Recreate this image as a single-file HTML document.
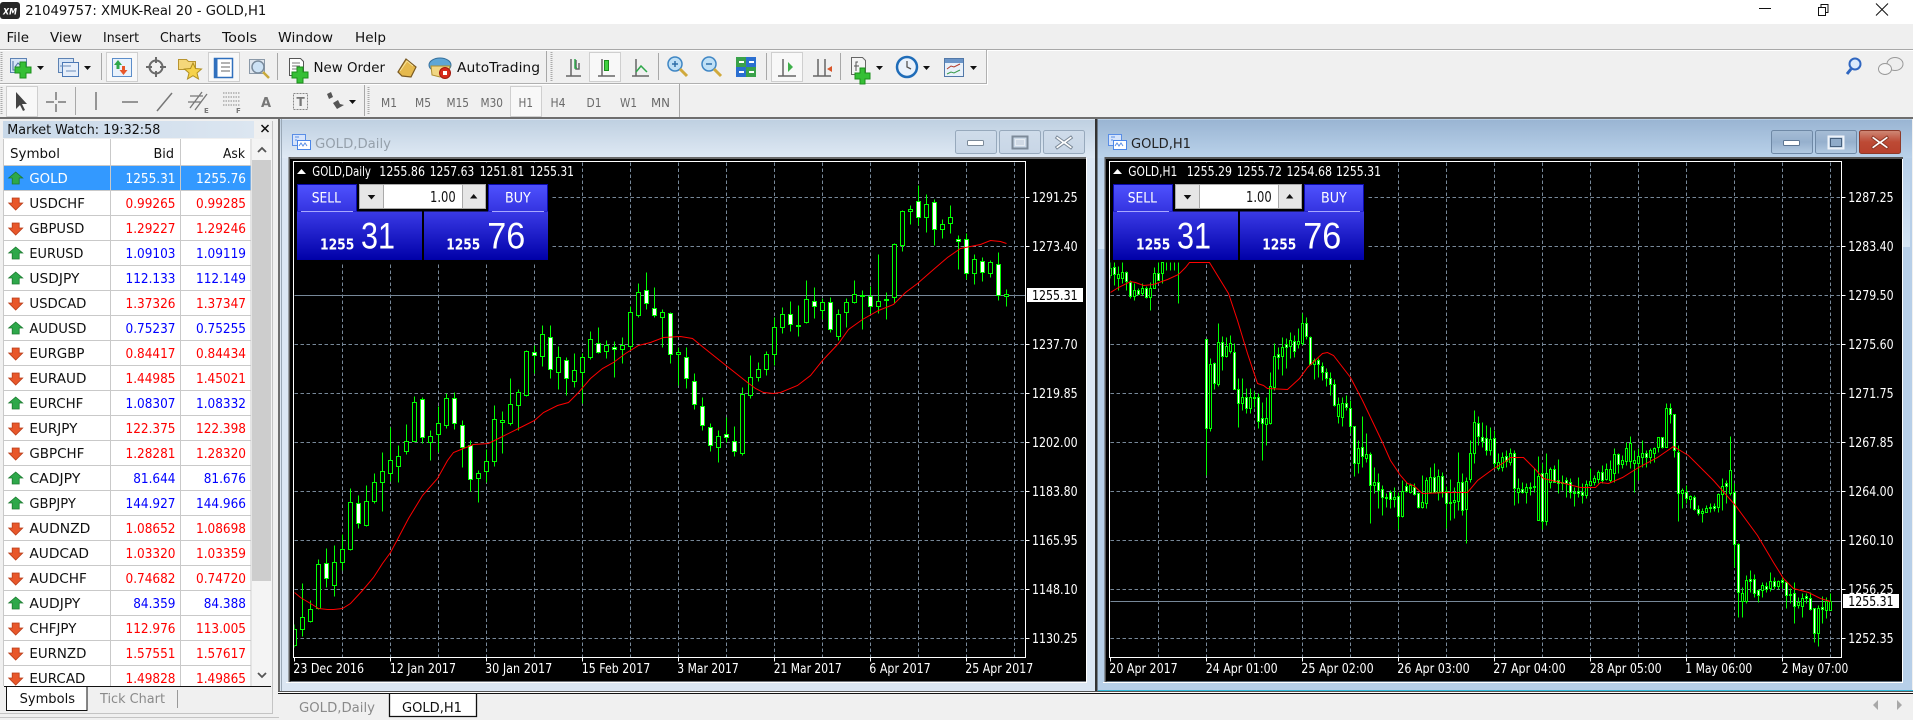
<!DOCTYPE html>
<html lang="en"><head><meta charset="utf-8"><title>21049757: XMUK-Real 20 - GOLD,H1</title>
<style>
html,body{margin:0;padding:0;width:1913px;height:720px;overflow:hidden;background:#f0f0f0}
svg{display:block}
text{font-family:"DejaVu Sans","Liberation Sans",sans-serif;font-size:13.5px;white-space:pre}
.w text{fill:#fff}
.r{fill:#f00}.b{fill:#00f}.s{fill:#111}
.tf{fill:#6a6a6a;font-size:12.5px}
.u{fill:#2ea84a;stroke:#1c7a30;stroke-width:.8}
.d{fill:#e8572a;stroke:#b83c18;stroke-width:.8}
.g{stroke:#778899;stroke-width:1;stroke-dasharray:3.5 2.5;fill:none}
.ic{fill:none;stroke:#666;stroke-width:1.5}
</style></head><body>
<svg width="1913" height="720" viewBox="0 0 1913 720" xmlns="http://www.w3.org/2000/svg">
<defs>
<linearGradient id="ti" x1="0" y1="0" x2="0" y2="1"><stop offset="0" stop-color="#bfd0e1"/><stop offset="1" stop-color="#dfe9f4"/></linearGradient>
<linearGradient id="ta" x1="0" y1="0" x2="0" y2="1"><stop offset="0" stop-color="#9ab5d3"/><stop offset="1" stop-color="#bad2ea"/></linearGradient>
<linearGradient id="bi" x1="0" y1="0" x2="0" y2="1"><stop offset="0" stop-color="#cfdcea"/><stop offset="1" stop-color="#c8d6e6"/></linearGradient>
<linearGradient id="ba" x1="0" y1="0" x2="0" y2="1"><stop offset="0" stop-color="#a6bdd6"/><stop offset=".5" stop-color="#96b0cd"/><stop offset="1" stop-color="#b4cbe2"/></linearGradient>
<linearGradient id="br" x1="0" y1="0" x2="0" y2="1"><stop offset="0" stop-color="#cf8a78"/><stop offset=".5" stop-color="#bd4a35"/><stop offset="1" stop-color="#b8412d"/></linearGradient>
<linearGradient id="bs" x1="0" y1="0" x2="0" y2="1"><stop offset="0" stop-color="#4f52ff"/><stop offset="1" stop-color="#3434e0"/></linearGradient>
<linearGradient id="bp" x1="0" y1="0" x2="0" y2="1"><stop offset="0" stop-color="#3a3ae6"/><stop offset="1" stop-color="#0000a8"/></linearGradient>
<linearGradient id="mw" x1="0" y1="0" x2="1" y2="0"><stop offset="0" stop-color="#c8d8e8"/><stop offset="1" stop-color="#dce6f1"/></linearGradient>
<linearGradient id="sl" x1="0" y1="0" x2="0" y2="1"><stop offset="0" stop-color="#b7cfe8"/><stop offset="1" stop-color="#d4e4f3"/></linearGradient>
<clipPath id="c1"><rect x="294" y="162" width="731" height="495"/></clipPath>
<clipPath id="c2"><rect x="1110" y="162" width="731" height="495"/></clipPath>
</defs>

<!-- title bar -->
<rect width="1913" height="24" fill="#fff"/>
<rect x="0" y="2" width="20" height="17" rx="3" fill="#262626"/>
<text x="3" y="14.5" style="font-size:9px;font-weight:bold;font-style:italic" fill="#fff" textLength="14" lengthAdjust="spacingAndGlyphs">XM</text>
<text x="25.3" y="15" fill="#111" textLength="241" lengthAdjust="spacingAndGlyphs">21049757: XMUK-Real 20 - GOLD,H1</text>
<path d="M1759 8.5h12" stroke="#111" fill="none"/>
<path d="M1818.5 7.5h7v8h-7zM1821 7.5v-3h7v8h-2" stroke="#111" fill="none"/>
<path d="M1876 3.5l12 12M1888 3.5l-12 12" stroke="#111" fill="none"/>

<!-- menu -->
<rect y="24" width="1913" height="25" fill="#efefef"/>
<g fill="#111">
<text x="6.5" y="42" textLength="22.5" lengthAdjust="spacingAndGlyphs">File</text>
<text x="50" y="42" textLength="32" lengthAdjust="spacingAndGlyphs">View</text>
<text x="103" y="42" textLength="36" lengthAdjust="spacingAndGlyphs">Insert</text>
<text x="160" y="42" textLength="41" lengthAdjust="spacingAndGlyphs">Charts</text>
<text x="222" y="42" textLength="35" lengthAdjust="spacingAndGlyphs">Tools</text>
<text x="278" y="42" textLength="55" lengthAdjust="spacingAndGlyphs">Window</text>
<text x="355" y="42" textLength="31" lengthAdjust="spacingAndGlyphs">Help</text>
</g>
<rect y="49" width="1913" height="1" fill="#a8a8a8"/>
<rect y="50" width="1913" height="1" fill="#fff"/>

<!-- toolbar 1 -->
<rect y="51" width="1913" height="66" fill="#f0f0f0"/>
<path d="M0 83.5H986.5V50" stroke="#b0b0b0" fill="none"/>
<path d="M0 84.5H987.5V50" stroke="#fff" fill="none"/>
<path d="M1.5 52V82M551.5 52V82" stroke="#aaa" stroke-dasharray="1 1" stroke-width="2" fill="none"/>
<g fill="#f8f8f8" stroke="#cfcfcf">
<rect x="106.5" y="52.5" width="31" height="29"/><rect x="208.5" y="52.5" width="31" height="29"/>
<rect x="589.5" y="52.5" width="31" height="29"/><rect x="771.5" y="52.5" width="31" height="29"/>
<rect x="6.5" y="86.5" width="31" height="30"/><rect x="510.5" y="86.5" width="31" height="30"/>
</g>
<path d="M101.5 53V80M277.5 53V80M546.5 51V82M658.5 53V80M766.5 53V80M840.5 53V80M75.5 87V115M364.5 85V116M679.5 84V117" stroke="#a8a8a8" fill="none"/>

<!-- new chart -->
<rect x="10.5" y="58.5" width="16" height="14" fill="#d5e4f6" stroke="#5d82b3"/>
<path d="M13 61v9h9M15 67l3-4 3 3" fill="none" stroke="#4a6f9e"/>
<path d="M20 62h6v5h5v6h-5v5h-6v-5h-5v-6h5z" fill="#35bf35" stroke="#1c8f1c"/>
<path d="M37 66h7l-3.500 4zM84 66h7l-3.500 4zM876 66h7l-3.500 4zM923 66h7l-3.500 4zM970 66h7l-3.500 4zM349 100h7l-3.500 4z" fill="#111"/>
<!-- profiles -->
<rect x="58.500" y="58.500" width="15" height="14" fill="#d5e4f6" stroke="#5d82b3"/>
<rect x="62.500" y="62.500" width="16" height="14" fill="#e6eef9" stroke="#4a77b5"/>
<path d="M60 66h11M66 71h10" stroke="#6a8cba" fill="none"/>
<!-- market watch -->
<rect x="112.500" y="58.500" width="19" height="18" fill="#e9f2fc" stroke="#5c8dc9"/>
<path d="M118 60l4 5h-2.500v4h-3v-4H114z" fill="#2ea84a"/><path d="M122 66h3v4h2.500l-4 5-4-5H122z" fill="#e8572a"/>
<!-- navigator crosshair -->
<circle cx="156" cy="67" r="6.500" fill="none" stroke="#6a6a6a" stroke-width="2"/>
<path d="M156 57v6M156 71v6M146 67h6M160 67h6" stroke="#6a6a6a" stroke-width="2" fill="none"/>
<!-- favorites -->
<path d="M178.500 59.500h8l2 2h7v8h-17z" fill="#f4d77a" stroke="#b89430"/>
<path d="M193 63l2.500 5.500 6 .5-4.500 4 1.500 6-5.500-3.300-5.500 3.300 1.500-6-4.500-4 6-.5z" fill="#f6d24a" stroke="#b08f20"/>
<!-- navigator panel -->
<rect x="214.500" y="58.500" width="18" height="19" fill="#fff" stroke="#2f6fbd" stroke-width="1.500"/>
<path d="M216 59v18" stroke="#2f6fbd" stroke-width="3"/><path d="M221 63h9M221 67h9M221 71h9" stroke="#666" fill="none"/>
<!-- tester -->
<rect x="249.500" y="59.500" width="15" height="14" fill="#dfe6ee" stroke="#8b99a8"/>
<circle cx="258" cy="67" r="6" fill="#cde2f5" stroke="#7a8b9c" stroke-width="1.500"/>
<path d="M263 72l6 6" stroke="#c9a93a" stroke-width="2.500"/>
<!-- new order -->
<path d="M289.500 58.500h11l3 3v14h-14z" fill="#fff" stroke="#555"/>
<path d="M292 63h8M292 66h8M292 69h5" stroke="#777" fill="none"/>
<path d="M297 67h6v5h5v6h-5v5h-6v-5h-5v-6h5z" fill="#35bf35" stroke="#1c8f1c"/>
<text x="313.500" y="72" fill="#111" textLength="71.500" lengthAdjust="spacingAndGlyphs">New Order</text>
<!-- gold bar -->
<path d="M398 72l8-13 10 8-5 10-9-1z" fill="#e5b94d" stroke="#7a5a22" stroke-width="1.200"/>
<path d="M400 71l7-10 6 5" fill="none" stroke="#f7e39b"/>
<!-- autotrading -->
<ellipse cx="440" cy="65" rx="11" ry="7" fill="#5ea6d6" stroke="#356f9c"/>
<path d="M431 66l1 9 8 2 8-3 2-8z" fill="#f1d682" stroke="#b08f30"/>
<circle cx="445" cy="73" r="5.500" fill="#d72a1c" stroke="#a01a10"/><rect x="443" y="71" width="4" height="4" fill="#fff"/>
<text x="457" y="72" fill="#111" textLength="83" lengthAdjust="spacingAndGlyphs">AutoTrading</text>
<!-- chart types -->
<path d="M566 76h15M571 59v17M577 60v-0M576 60v9h3v-6" fill="none" stroke="#666" stroke-width="1.500"/>
<path d="M575 59v9h2" fill="none" stroke="#2ea84a" stroke-width="1.500"/>
<path d="M598 76h17M602 59v17" fill="none" stroke="#666" stroke-width="1.500"/>
<rect x="604.500" y="60.500" width="4" height="10" fill="#40d040" stroke="#1c8f1c"/>
<path d="M632 76h17M636 59v17" fill="none" stroke="#666" stroke-width="1.500"/><path d="M636 72l5-6 6 6" fill="none" stroke="#2ea84a" stroke-width="1.500"/>
<!-- zoom -->
<circle cx="675" cy="64" r="7" fill="#bfe0f6" stroke="#3f86c4" stroke-width="1.500"/><path d="M672 64h6M675 61v6" stroke="#2f6fa8" stroke-width="1.500"/>
<path d="M680 69l7 7" stroke="#d0a93c" stroke-width="3"/>
<circle cx="709" cy="64" r="7" fill="#bfe0f6" stroke="#3f86c4" stroke-width="1.500"/><path d="M706 64h6" stroke="#2f6fa8" stroke-width="1.500"/>
<path d="M714 69l7 7" stroke="#d0a93c" stroke-width="3"/>
<!-- tile -->
<rect x="736" y="57" width="10" height="10" fill="#3aa24a"/><rect x="746" y="57" width="10" height="10" fill="#2b6fd0"/>
<rect x="736" y="67" width="10" height="10" fill="#2b6fd0"/><rect x="746" y="67" width="10" height="10" fill="#3aa24a"/>
<path d="M739 62h5M749 62h5M739 72h5M749 72h5" stroke="#fff" stroke-width="2"/>
<!-- shift -->
<path d="M778 76h18M783 59v17" fill="none" stroke="#666" stroke-width="1.500"/><path d="M788 62l5 5-5 5z" fill="#3fb04a"/>
<path d="M813 76h18M818 59v17M825 59v17" fill="none" stroke="#666" stroke-width="1.500"/><path d="M832 66l-5 3 5 3z" fill="#d9562a"/>
<!-- indicators -->
<path d="M851.500 57.500h11l3 3v14h-14z" fill="#f4f4f4" stroke="#666"/><path d="M858 62h-2v9M854 66h5" fill="none" stroke="#555"/>
<path d="M860 68h5v5h5v6h-5v5h-5v-5h-5v-6h5z" fill="#35bf35" stroke="#1c8f1c"/>
<!-- periodicity clock -->
<circle cx="907" cy="67" r="10" fill="#eaf2fb" stroke="#1f6cb8" stroke-width="2.500"/><path d="M907 61v6l4 2" fill="none" stroke="#555" stroke-width="1.300"/>
<!-- templates -->
<rect x="944.500" y="58.500" width="19" height="18" fill="#e9f1fa" stroke="#5278a8"/>
<rect x="945" y="59" width="18" height="4" fill="#6b95c8"/>
<path d="M947 69l4-3 3 1 6-3" stroke="#b03a2a" fill="none"/><path d="M947 74l4-2 3 1 6-3" stroke="#3a9a4a" fill="none"/>
<!-- search/chat -->
<circle cx="1855" cy="64" r="5.500" fill="#dbeafb" stroke="#2f66c0" stroke-width="2"/><path d="M1851 69l-4 5" stroke="#2f66c0" stroke-width="3"/>
<ellipse cx="1895" cy="64" rx="8" ry="6.500" fill="#eee" stroke="#999"/><ellipse cx="1885" cy="69" rx="6.500" ry="5.500" fill="#f5f5f5" stroke="#999"/>

<!-- toolbar 2 -->
<path d="M1.500 87V115M368.500 87V115" stroke="#aaa" stroke-dasharray="1 1" stroke-width="2" fill="none"/>
<path d="M16 92v17l4-4 3 6 2-1-3-6h5z" fill="#444"/>
<path d="M56 92v8M56 104v8M46 102h8M58 102h8" stroke="#777" stroke-width="1.500" fill="none"/>
<path d="M96 92v18M122 102h16M157 111l15-18" stroke="#777" stroke-width="1.500" fill="none"/>
<path d="M190 108l12-16M195 110l12-16M190 96h13M188 102h13" stroke="#777" stroke-width="1.300" fill="none"/>
<text x="204" y="113" style="font-size:7px;font-weight:bold" fill="#777">E</text>
<path d="M223 93h17M223 97h17M223 101h17M223 105h17" stroke="#888" stroke-dasharray="1.500 1" fill="none"/>
<text x="236" y="113" style="font-size:7px;font-weight:bold" fill="#777">F</text>
<text x="261" y="107" style="font-size:13px;font-weight:bold" fill="#777">A</text>
<rect x="293.500" y="93.500" width="14" height="16" fill="none" stroke="#888" stroke-dasharray="2 1"/>
<text x="296.500" y="106" style="font-size:12px;font-weight:bold" fill="#777">T</text>
<path d="M327 94l4-2 2 5-4 2zM333 103l5-3 2 4 4 1-7 4z" fill="#555"/>

<!-- timeframes -->
<g class="tf">
<text class="tf" x="381" y="107" textLength="16" lengthAdjust="spacingAndGlyphs">M1</text>
<text class="tf" x="415" y="107" textLength="16" lengthAdjust="spacingAndGlyphs">M5</text>
<text class="tf" x="446.500" y="107" textLength="22.500" lengthAdjust="spacingAndGlyphs">M15</text>
<text class="tf" x="480.500" y="107" textLength="22.500" lengthAdjust="spacingAndGlyphs">M30</text>
<text class="tf" x="518.500" y="107" textLength="14.500" lengthAdjust="spacingAndGlyphs">H1</text>
<text class="tf" x="550.500" y="107" textLength="15" lengthAdjust="spacingAndGlyphs">H4</text>
<text class="tf" x="586.500" y="107" textLength="15" lengthAdjust="spacingAndGlyphs">D1</text>
<text class="tf" x="620" y="107" textLength="17" lengthAdjust="spacingAndGlyphs">W1</text>
<text class="tf" x="651" y="107" textLength="19" lengthAdjust="spacingAndGlyphs">MN</text>
</g>

<!-- MDI top border -->
<rect y="117" width="1913" height="2" fill="#6e6e6e"/>

<!-- market watch panel -->
<rect x="3" y="121" width="251" height="17" fill="url(#mw)"/>
<text x="7.300" y="134" fill="#111" textLength="153" lengthAdjust="spacingAndGlyphs">Market Watch: 19:32:58</text>
<path d="M261.500 125l7 7M268.500 125l-7 7" stroke="#111" stroke-width="1.500"/>
<rect x="4" y="139" width="248" height="547" fill="#fff"/>
<rect x="252" y="139" width="20" height="547" fill="#f4f4f4"/>
<rect x="252" y="160" width="19" height="421" fill="#cdcdcd"/>
<path d="M258 152l4-4 4 4M258 673l4 4 4-4" fill="none" stroke="#555" stroke-width="1.800"/>
<rect x="4" y="165" width="247" height="25" fill="#3399ff"/>
<path d="M3.500 139V686M110.500 139V686M180.500 139V686M251 139V686M4 165.500H251M4 190.500H251M4 215.500H251M4 240.500H251M4 265.500H251M4 290.500H251M4 315.500H251M4 340.500H251M4 365.500H251M4 390.500H251M4 415.500H251M4 440.500H251M4 465.500H251M4 490.500H251M4 515.500H251M4 540.500H251M4 565.500H251M4 590.500H251M4 615.500H251M4 640.500H251M4 665.500H251" stroke="#c9c9c9" fill="none"/>
<text class="s" x="10" y="158" textLength="50" lengthAdjust="spacingAndGlyphs">Symbol</text>
<text class="s" x="153.500" y="158" textLength="20.500" lengthAdjust="spacingAndGlyphs">Bid</text>
<text class="s" x="223" y="158" textLength="22" lengthAdjust="spacingAndGlyphs">Ask</text>

<path class="u" d="M15.700 172l7 6h-3.500v6h-7v-6h-3.500z"/><text x="29.400" y="183" fill="#fff" textLength="38.400" lengthAdjust="spacingAndGlyphs">GOLD</text><text x="125.500" y="183" fill="#fff" textLength="50" lengthAdjust="spacingAndGlyphs">1255.31</text><text x="196" y="183" fill="#fff" textLength="50" lengthAdjust="spacingAndGlyphs">1255.76</text>
<path class="d" d="M12.200 198h7v5h3.500l-7 7-7-7h3.500z"/><text class="s" x="29.400" y="208" textLength="55.500" lengthAdjust="spacingAndGlyphs">USDCHF</text><text class="r" x="125.500" y="208" textLength="50" lengthAdjust="spacingAndGlyphs">0.99265</text><text class="r" x="196" y="208" textLength="50" lengthAdjust="spacingAndGlyphs">0.99285</text>
<path class="d" d="M12.200 223h7v5h3.500l-7 7-7-7h3.500z"/><text class="s" x="29.400" y="233" textLength="55" lengthAdjust="spacingAndGlyphs">GBPUSD</text><text class="r" x="125.500" y="233" textLength="50" lengthAdjust="spacingAndGlyphs">1.29227</text><text class="r" x="196" y="233" textLength="50" lengthAdjust="spacingAndGlyphs">1.29246</text>
<path class="u" d="M15.700 247l7 6h-3.500v6h-7v-6h-3.500z"/><text class="s" x="29.400" y="258" textLength="54" lengthAdjust="spacingAndGlyphs">EURUSD</text><text class="b" x="125.500" y="258" textLength="50" lengthAdjust="spacingAndGlyphs">1.09103</text><text class="b" x="196" y="258" textLength="50" lengthAdjust="spacingAndGlyphs">1.09119</text>
<path class="u" d="M15.700 272l7 6h-3.500v6h-7v-6h-3.500z"/><text class="s" x="29.400" y="283" textLength="50" lengthAdjust="spacingAndGlyphs">USDJPY</text><text class="b" x="125.500" y="283" textLength="50" lengthAdjust="spacingAndGlyphs">112.133</text><text class="b" x="196" y="283" textLength="50" lengthAdjust="spacingAndGlyphs">112.149</text>
<path class="d" d="M12.200 298h7v5h3.500l-7 7-7-7h3.500z"/><text class="s" x="29.400" y="308" textLength="57" lengthAdjust="spacingAndGlyphs">USDCAD</text><text class="r" x="125.500" y="308" textLength="50" lengthAdjust="spacingAndGlyphs">1.37326</text><text class="r" x="196" y="308" textLength="50" lengthAdjust="spacingAndGlyphs">1.37347</text>
<path class="u" d="M15.700 322l7 6h-3.500v6h-7v-6h-3.500z"/><text class="s" x="29.400" y="333" textLength="57" lengthAdjust="spacingAndGlyphs">AUDUSD</text><text class="b" x="125.500" y="333" textLength="50" lengthAdjust="spacingAndGlyphs">0.75237</text><text class="b" x="196" y="333" textLength="50" lengthAdjust="spacingAndGlyphs">0.75255</text>
<path class="d" d="M12.200 348h7v5h3.500l-7 7-7-7h3.500z"/><text class="s" x="29.400" y="358" textLength="55" lengthAdjust="spacingAndGlyphs">EURGBP</text><text class="r" x="125.500" y="358" textLength="50" lengthAdjust="spacingAndGlyphs">0.84417</text><text class="r" x="196" y="358" textLength="50" lengthAdjust="spacingAndGlyphs">0.84434</text>
<path class="d" d="M12.200 373h7v5h3.500l-7 7-7-7h3.500z"/><text class="s" x="29.400" y="383" textLength="57" lengthAdjust="spacingAndGlyphs">EURAUD</text><text class="r" x="125.500" y="383" textLength="50" lengthAdjust="spacingAndGlyphs">1.44985</text><text class="r" x="196" y="383" textLength="50" lengthAdjust="spacingAndGlyphs">1.45021</text>
<path class="u" d="M15.700 397l7 6h-3.500v6h-7v-6h-3.500z"/><text class="s" x="29.400" y="408" textLength="54" lengthAdjust="spacingAndGlyphs">EURCHF</text><text class="b" x="125.500" y="408" textLength="50" lengthAdjust="spacingAndGlyphs">1.08307</text><text class="b" x="196" y="408" textLength="50" lengthAdjust="spacingAndGlyphs">1.08332</text>
<path class="d" d="M12.200 423h7v5h3.500l-7 7-7-7h3.500z"/><text class="s" x="29.400" y="433" textLength="48" lengthAdjust="spacingAndGlyphs">EURJPY</text><text class="r" x="125.500" y="433" textLength="50" lengthAdjust="spacingAndGlyphs">122.375</text><text class="r" x="196" y="433" textLength="50" lengthAdjust="spacingAndGlyphs">122.398</text>
<path class="d" d="M12.200 448h7v5h3.500l-7 7-7-7h3.500z"/><text class="s" x="29.400" y="458" textLength="55" lengthAdjust="spacingAndGlyphs">GBPCHF</text><text class="r" x="125.500" y="458" textLength="50" lengthAdjust="spacingAndGlyphs">1.28281</text><text class="r" x="196" y="458" textLength="50" lengthAdjust="spacingAndGlyphs">1.28320</text>
<path class="u" d="M15.700 472l7 6h-3.500v6h-7v-6h-3.500z"/><text class="s" x="29.400" y="483" textLength="51" lengthAdjust="spacingAndGlyphs">CADJPY</text><text class="b" x="133.200" y="483" textLength="42.300" lengthAdjust="spacingAndGlyphs">81.644</text><text class="b" x="203.700" y="483" textLength="42.300" lengthAdjust="spacingAndGlyphs">81.676</text>
<path class="u" d="M15.700 497l7 6h-3.500v6h-7v-6h-3.500z"/><text class="s" x="29.400" y="508" textLength="46.500" lengthAdjust="spacingAndGlyphs">GBPJPY</text><text class="b" x="125.500" y="508" textLength="50" lengthAdjust="spacingAndGlyphs">144.927</text><text class="b" x="196" y="508" textLength="50" lengthAdjust="spacingAndGlyphs">144.966</text>
<path class="d" d="M12.200 523h7v5h3.500l-7 7-7-7h3.500z"/><text class="s" x="29.400" y="533" textLength="61" lengthAdjust="spacingAndGlyphs">AUDNZD</text><text class="r" x="125.500" y="533" textLength="50" lengthAdjust="spacingAndGlyphs">1.08652</text><text class="r" x="196" y="533" textLength="50" lengthAdjust="spacingAndGlyphs">1.08698</text>
<path class="d" d="M12.200 548h7v5h3.500l-7 7-7-7h3.500z"/><text class="s" x="29.400" y="558" textLength="59.600" lengthAdjust="spacingAndGlyphs">AUDCAD</text><text class="r" x="125.500" y="558" textLength="50" lengthAdjust="spacingAndGlyphs">1.03320</text><text class="r" x="196" y="558" textLength="50" lengthAdjust="spacingAndGlyphs">1.03359</text>
<path class="d" d="M12.200 573h7v5h3.500l-7 7-7-7h3.500z"/><text class="s" x="29.400" y="583" textLength="57.500" lengthAdjust="spacingAndGlyphs">AUDCHF</text><text class="r" x="125.500" y="583" textLength="50" lengthAdjust="spacingAndGlyphs">0.74682</text><text class="r" x="196" y="583" textLength="50" lengthAdjust="spacingAndGlyphs">0.74720</text>
<path class="u" d="M15.700 597l7 6h-3.500v6h-7v-6h-3.500z"/><text class="s" x="29.400" y="608" textLength="51" lengthAdjust="spacingAndGlyphs">AUDJPY</text><text class="b" x="133.200" y="608" textLength="42.300" lengthAdjust="spacingAndGlyphs">84.359</text><text class="b" x="203.700" y="608" textLength="42.300" lengthAdjust="spacingAndGlyphs">84.388</text>
<path class="d" d="M12.200 623h7v5h3.500l-7 7-7-7h3.500z"/><text class="s" x="29.400" y="633" textLength="47" lengthAdjust="spacingAndGlyphs">CHFJPY</text><text class="r" x="125.500" y="633" textLength="50" lengthAdjust="spacingAndGlyphs">112.976</text><text class="r" x="196" y="633" textLength="50" lengthAdjust="spacingAndGlyphs">113.005</text>
<path class="d" d="M12.200 648h7v5h3.500l-7 7-7-7h3.500z"/><text class="s" x="29.400" y="658" textLength="57" lengthAdjust="spacingAndGlyphs">EURNZD</text><text class="r" x="125.500" y="658" textLength="50" lengthAdjust="spacingAndGlyphs">1.57551</text><text class="r" x="196" y="658" textLength="50" lengthAdjust="spacingAndGlyphs">1.57617</text>
<path class="d" d="M12.200 673h7v5h3.500l-7 7-7-7h3.500z"/><text class="s" x="29.400" y="683" textLength="56" lengthAdjust="spacingAndGlyphs">EURCAD</text><text class="r" x="125.500" y="683" textLength="50" lengthAdjust="spacingAndGlyphs">1.49828</text><text class="r" x="196" y="683" textLength="50" lengthAdjust="spacingAndGlyphs">1.49865</text>

<!-- market watch tabs -->
<rect x="0" y="686" width="278" height="34" fill="#f0f0f0"/>
<path d="M4 686.500H271" stroke="#111"/>
<path d="M6.500 687V710.500H87V687" fill="#fff" stroke="#111"/>
<text class="s" x="19.600" y="703" textLength="55.400" lengthAdjust="spacingAndGlyphs">Symbols</text>
<text x="100" y="703" fill="#8a8a8a" textLength="65" lengthAdjust="spacingAndGlyphs">Tick Chart</text>
<path d="M177.500 690V708" stroke="#999"/>
<path d="M0 713.500H273M0 717.500H279M272.500 121V714" stroke="#c4c4c4" fill="none"/>
<rect x="278" y="117" width="2" height="576" fill="#6e6e6e"/>

<!-- Daily window -->
<rect x="280" y="119" width="815" height="572" fill="#dbe6f3"/>
<rect x="280" y="120" width="815" height="38" fill="url(#ti)"/>
<rect x="281" y="119" width="1" height="572" fill="#9aa8b6"/>
<path d="M286 682.500H1086.500V158" stroke="#fff" fill="none"/>
<rect x="289" y="157" width="797" height="2" fill="#6a6a6a"/><rect x="288.500" y="157" width="2" height="525" fill="#5a5a5a"/>
<rect x="290" y="159" width="796" height="522.500" fill="#000"/>
<rect x="292.500" y="134.500" width="13" height="11" fill="#d6e4fb" stroke="#5a8ee6"/><path d="M295 137h4M295 140h2" stroke="#5a8ee6"/>
<rect x="297.500" y="140.500" width="13" height="9" fill="#fff" stroke="#4a86e8"/><path d="M299 146l2-3 2 3 2-3 2 3" fill="none" stroke="#5a8ee6"/>
<text x="315" y="148" fill="#95a0ab" textLength="76" lengthAdjust="spacingAndGlyphs">GOLD,Daily</text>
<rect x="955.500" y="130.500" width="41" height="23" rx="2" fill="url(#bi)" stroke="#97a9bc"/>
<rect x="999.500" y="130.500" width="41" height="23" rx="2" fill="url(#bi)" stroke="#97a9bc"/>
<rect x="1043.500" y="130.500" width="41" height="23" rx="2" fill="url(#bi)" stroke="#97a9bc"/>
<rect x="967.500" y="140.500" width="16" height="5" rx="1" fill="#fff" stroke="#7c8a99"/>
<rect x="1012.500" y="136.500" width="15" height="12" fill="none" stroke="#7c8a99" stroke-width="2"/><rect x="1015.500" y="139.500" width="9" height="6" fill="#cfd9e5" stroke="#fff" stroke-width=".5"/>
<path d="M1057 136l7 5 7-5 1.500 2-6 4.500 6 4.500-1.500 2-7-5-7 5-1.500-2 6-4.500-6-4.500z" fill="#fff" stroke="#7c8a99"/>

<g transform="translate(.5 .5)">
<path class="g" d="M342 162V657M390 162V657M438 162V657M486 162V657M534 162V657M582 162V657M630 162V657M678 162V657M726 162V657M774 162V657M822 162V657M870 162V657M918 162V657M966 162V657M1014 162V657"/>
<path class="g" d="M294 197H1025M294 246H1025M294 295H1025M294 344H1025M294 393H1025M294 442H1025M294 491H1025M294 540H1025M294 589H1025M294 638H1025"/>
<path d="M294 295H1025" stroke="#778899"/>
<g clip-path="url(#c1)">
<path fill="none" stroke="#0f0" d="M294 624V647M302 583V636M310 600V622M318 559V609M326 548V587M334 545V596M342 534V570M350 488V550M358 495V528M366 485V526M374 473V503M382 452V511M390 427V481M398 445V482M406 424V454M414 396V441M422 397V443M430 430V460M438 406V452M446 393V428M454 392V429M462 420V467M470 440V491M478 470V502M486 449V482M494 405V466M502 411V453M510 378V425M518 389V430M526 350V396M534 345V373M542 325V366M550 325V378M558 346V389M566 357V395M574 353V387M582 353V403M590 331V359M598 327V353M606 340V358M614 341V377M622 337V363M630 306V350M638 283V317M646 272V309M654 287V317M662 309V347M670 312V363M678 347V385M686 347V388M694 373V409M702 397V430M710 423V451M718 430V462M726 417V442M734 426V456M742 387V455M750 355V398M758 362V381M766 351V375M774 317V365M782 307V333M790 301V331M798 305V336M806 280V323M814 287V318M822 298V319M830 297V332M838 309V340M846 298V327M854 280V303M862 290V329M870 286V313M878 254V313M886 292V319M894 243V303M902 210V251M910 205V224M918 185V225M926 194V232M934 199V245M942 219V238M950 205V233M958 235V269M966 233V279M974 254V284M982 257V281M990 260V277M998 252V300M1006 289V306"/>
<path fill="#000" stroke="#0f0" d="M292 629h4v16h-4zM300 617h4v12h-4zM308 609h4v12h-4zM316 564h4v44h-4zM332 562h4v23h-4zM340 549h4v13h-4zM348 502h4v47h-4zM364 501h4v24h-4zM372 482h4v19h-4zM380 471h4v11h-4zM388 460h4v13h-4zM396 456h4v10h-4zM404 441h4v10h-4zM412 402h4v39h-4zM428 436h4v6h-4zM436 423h4v11h-4zM444 398h4v27h-4zM476 473h4v5h-4zM484 461h4v10h-4zM492 419h4v42h-4zM500 420h4v2h-4zM508 404h4v19h-4zM516 392h4v13h-4zM524 351h4v44h-4zM540 334h4v22h-4zM556 357h4v15h-4zM572 370h4v11h-4zM580 357h4v15h-4zM588 339h4v18h-4zM604 345h4v6h-4zM620 345h4v4h-4zM628 312h4v34h-4zM636 292h4v23h-4zM660 312h4v5h-4zM676 352h4v2h-4zM716 436h4v11h-4zM740 394h4v59h-4zM748 377h4v18h-4zM756 369h4v8h-4zM764 354h4v15h-4zM772 327h4v27h-4zM780 314h4v13h-4zM796 325h4v1h-4zM804 299h4v23h-4zM820 302h4v8h-4zM836 314h4v22h-4zM844 302h4v10h-4zM852 294h4v8h-4zM860 295h4v1h-4zM876 301h4v5h-4zM884 299h4v1h-4zM892 244h4v53h-4zM900 211h4v34h-4zM908 209h4v2h-4zM924 204h4v13h-4zM940 224h4v5h-4zM948 217h4v6h-4zM972 259h4v14h-4zM988 262h4v11h-4zM1004 294h4v2h-4z"/>
<path fill="#fff" stroke="#0f0" d="M324 563h4v15h-4zM356 503h4v20h-4zM420 399h4v38h-4zM452 398h4v25h-4zM460 425h4v22h-4zM468 445h4v34h-4zM532 352h4v3h-4zM548 337h4v32h-4zM564 360h4v18h-4zM596 343h4v9h-4zM612 347h4v2h-4zM644 290h4v13h-4zM652 308h4v7h-4zM668 313h4v41h-4zM684 357h4v21h-4zM692 381h4v23h-4zM700 406h4v19h-4zM708 427h4v18h-4zM724 434h4v3h-4zM732 441h4v10h-4zM788 314h4v10h-4zM812 301h4v5h-4zM828 302h4v27h-4zM868 296h4v10h-4zM916 201h4v16h-4zM932 202h4v27h-4zM956 239h4v2h-4zM964 239h4v34h-4zM980 261h4v11h-4zM996 264h4v31h-4z"/>
<path fill="none" stroke="#f00" d="M294 592L300 597 310 603 318 608 327 609 333 609 342 608 350 603 362 590 373 577 382 563 390 552 398 537 408 518 422 495 437 478 447 460 453 452 463 448 473 444 488 443 500 437 518 428 534 420 543 412 557 405 568 402 578 392 590 378 602 368 613 362 625 353 638 345 650 342 663 337 680 336 692 338 703 347 723 363 747 382 755 388 763 392 773 393 780 392 797 385 810 375 822 360 838 343 848 329 862 319 878 310 893 304 905 292 917 283 933 269 947 257 960 248 980 244 990 240 1000 241 1006 243"/>
</g>
<rect x="293" y="161" width="732" height="496" fill="none" stroke="#fff"/>
<path stroke="#fff" d="M1025 197h4M1025 246h4M1025 344h4M1025 393h4M1025 442h4M1025 491h4M1025 540h4M1025 589h4M1025 638h4M294 657v4M390 657v4M486 657v4M582 657v4M678 657v4M774 657v4M870 657v4M966 657v4"/>
</g>
<rect x="294" y="163" width="285" height="20" fill="#000"/>
<rect x="294" y="181" width="258" height="81" fill="#000"/>
<path d="M297 174l4.500-5 4.500 5z" fill="#fff"/>
<g class="w">
<text x="312.300" y="176" textLength="58.700" lengthAdjust="spacingAndGlyphs">GOLD,Daily</text>
<text x="379.300" y="176" textLength="45.700" lengthAdjust="spacingAndGlyphs">1255.86</text>
<text x="429.700" y="176" textLength="44.600" lengthAdjust="spacingAndGlyphs">1257.63</text>
<text x="479.700" y="176" textLength="44.600" lengthAdjust="spacingAndGlyphs">1251.81</text>
<text x="529.700" y="176" textLength="44.300" lengthAdjust="spacingAndGlyphs">1255.31</text>
<text x="1032" y="202" textLength="45.600" lengthAdjust="spacingAndGlyphs">1291.25</text>
<text x="1032" y="251" textLength="45.600" lengthAdjust="spacingAndGlyphs">1273.40</text>
<text x="1032" y="349" textLength="45.600" lengthAdjust="spacingAndGlyphs">1237.70</text>
<text x="1032" y="398" textLength="45.600" lengthAdjust="spacingAndGlyphs">1219.85</text>
<text x="1032" y="447" textLength="45.600" lengthAdjust="spacingAndGlyphs">1202.00</text>
<text x="1032" y="496" textLength="45.600" lengthAdjust="spacingAndGlyphs">1183.80</text>
<text x="1032" y="545" textLength="45.600" lengthAdjust="spacingAndGlyphs">1165.95</text>
<text x="1032" y="594" textLength="45.600" lengthAdjust="spacingAndGlyphs">1148.10</text>
<text x="1032" y="643" textLength="45.600" lengthAdjust="spacingAndGlyphs">1130.25</text>
<text x="293.300" y="673" textLength="70.700" lengthAdjust="spacingAndGlyphs">23 Dec 2016</text>
<text x="389.700" y="673" textLength="66.300" lengthAdjust="spacingAndGlyphs">12 Jan 2017</text>
<text x="485" y="673" textLength="67.300" lengthAdjust="spacingAndGlyphs">30 Jan 2017</text>
<text x="581.700" y="673" textLength="68.600" lengthAdjust="spacingAndGlyphs">15 Feb 2017</text>
<text x="677.300" y="673" textLength="61.400" lengthAdjust="spacingAndGlyphs">3 Mar 2017</text>
<text x="773.700" y="673" textLength="68" lengthAdjust="spacingAndGlyphs">21 Mar 2017</text>
<text x="869.300" y="673" textLength="61.400" lengthAdjust="spacingAndGlyphs">6 Apr 2017</text>
<text x="965.300" y="673" textLength="68" lengthAdjust="spacingAndGlyphs">25 Apr 2017</text>
</g>
<rect x="1027" y="288" width="56" height="14" fill="#fff"/>
<text x="1032" y="300" fill="#000" textLength="45.600" lengthAdjust="spacingAndGlyphs">1255.31</text>

<!-- H1 window -->
<rect x="1095" y="119" width="2.500" height="572" fill="#333"/>
<rect x="1097.500" y="119" width="814.500" height="572" fill="#b7cfe8"/>
<rect x="1097.500" y="120" width="814.500" height="38" fill="url(#ta)"/>
<rect x="1098" y="159" width="8" height="90" fill="url(#sl)"/>
<rect x="1902" y="159" width="8" height="88" fill="url(#sl)"/>
<path d="M1103 682.500H1902.500V158" stroke="#fff" fill="none"/>
<rect x="1105" y="157" width="798" height="2" fill="#555"/><rect x="1104.500" y="157" width="2" height="525" fill="#555"/>
<rect x="1106" y="159" width="796" height="522.500" fill="#000"/>
<rect x="1098" y="690" width="815" height="1.500" fill="#2fb8d8"/>
<rect x="1108.500" y="134.500" width="13" height="11" fill="#d6e4fb" stroke="#5a8ee6"/><path d="M1111 137h4M1111 140h2" stroke="#5a8ee6"/>
<rect x="1113.500" y="140.500" width="13" height="9" fill="#fff" stroke="#4a86e8"/><path d="M1115 146l2-3 2 3 2-3 2 3" fill="none" stroke="#5a8ee6"/>
<text x="1131" y="148" fill="#222" textLength="60" lengthAdjust="spacingAndGlyphs">GOLD,H1</text>
<rect x="1771.500" y="130.500" width="41" height="23" rx="2" fill="url(#ba)" stroke="#6f89a6"/>
<rect x="1815.500" y="130.500" width="41" height="23" rx="2" fill="url(#ba)" stroke="#6f89a6"/>
<rect x="1859.500" y="130.500" width="41" height="23" rx="2" fill="url(#br)" stroke="#8e3a2a"/>
<rect x="1783.500" y="140.500" width="16" height="5" rx="1" fill="#fff" stroke="#5d7693"/>
<rect x="1828.500" y="136.500" width="15" height="12" fill="none" stroke="#eef3f9" stroke-width="2"/><rect x="1830.500" y="138.500" width="11" height="8" fill="#8fabc9" stroke="#46607d"/>
<path d="M1873 136l7 5 7-5 1.500 2-6 4.500 6 4.500-1.500 2-7-5-7 5-1.500-2 6-4.500-6-4.500z" fill="#fff" stroke="#8e3a2a"/>

<g transform="translate(.5 .5)">
<path class="g" d="M1158 162V657M1206 162V657M1254 162V657M1302 162V657M1350 162V657M1398 162V657M1446 162V657M1494 162V657M1542 162V657M1590 162V657M1638 162V657M1686 162V657M1734 162V657M1782 162V657M1830 162V657"/>
<path class="g" d="M1110 197H1841M1110 246H1841M1110 295H1841M1110 344H1841M1110 393H1841M1110 442H1841M1110 491H1841M1110 540H1841M1110 589H1841M1110 638H1841"/>
<path d="M1110 601H1841" stroke="#778899"/>
<g clip-path="url(#c2)">
<path fill="none" stroke="#0f0" d="M1110 262V278M1114 262V285M1118 266V290M1122 262V283M1126 271V290M1130 280V298M1134 283V300M1138 288V295M1142 283V295M1146 286V298M1150 282V310M1154 267V288M1158 262V280M1162 262V283M1166 262V270M1170 262V270M1174 262V270M1178 262V303M1206 339V475M1210 358V431M1214 362V389M1218 323V386M1222 336V370M1226 337V357M1230 335V353M1234 343V389M1238 378V427M1242 378V410M1246 388V413M1250 388V413M1254 391V407M1258 393V428M1262 402V460M1266 397V445M1270 372V424M1274 343V390M1278 347V369M1282 337V375M1286 338V368M1290 332V358M1294 335V357M1298 328V348M1302 313V345M1306 317V339M1310 336V365M1314 358V379M1318 358V377M1322 362V380M1326 368V386M1330 372V395M1334 379V406M1338 397V423M1342 397V426M1346 395V410M1350 400V433M1354 426V476M1358 440V473M1362 416V467M1366 433V462M1370 452V523M1374 467V493M1378 473V508M1382 485V515M1386 493V507M1390 490V508M1394 487V507M1398 492V529M1402 480V517M1406 482V492M1410 483V493M1414 483V495M1418 492V508M1422 475V508M1426 477V508M1430 467V493M1434 463V493M1438 469V500M1442 472V497M1446 486V528M1450 479V520M1454 487V518M1458 452V510M1462 473V515M1466 477V543M1470 440V482M1474 410V463M1478 416V445M1482 422V447M1486 425V455M1490 427V455M1494 430V468M1498 453V470M1502 452V471M1506 450V467M1510 448V465M1514 450V505M1518 478V503M1522 482V493M1526 483V503M1530 482V495M1534 468V492M1538 456V518M1542 463V529M1546 453V525M1550 467V488M1554 465V482M1558 459V493M1562 475V490M1566 477V497M1570 478V498M1574 487V506M1578 477V497M1582 483V503M1586 480V498M1590 468V485M1594 475V485M1598 470V483M1602 465V483M1606 463V480M1610 460V482M1614 448V482M1618 453V473M1622 455V468M1626 442V465M1630 436V468M1634 450V492M1638 448V480M1642 440V467M1646 450V467M1650 448V463M1654 447V462M1658 437V452M1662 437V448M1666 403V447M1670 403V423M1674 414V457M1678 445V521M1682 488V508M1686 485V503M1690 495V508M1694 495V510M1698 505V515M1702 508V522M1706 505V512M1710 503V512M1714 503V511M1718 493V512M1722 478V510M1726 480V503M1730 436V495M1734 483V567M1738 543V617M1742 587V617M1746 575V603M1750 570V592M1754 574V597M1758 589V602M1762 582V597M1766 582V592M1770 572V591M1774 577V589M1778 580V589M1782 577V588M1786 581V608M1790 588V603M1794 582V623M1798 597V608M1802 593V617M1806 593V603M1810 592V610M1814 608V642M1818 605V646M1822 596V623M1826 597V618M1830 593V610"/>
<path fill="#000" stroke="#0f0" d="M1109 268h2v7h-2zM1117 274h2v4h-2zM1121 272h2v6h-2zM1133 290h2v6h-2zM1141 288h2v5h-2zM1149 288h2v9h-2zM1153 273h2v15h-2zM1161 262h2v11h-2zM1209 364h2v64h-2zM1217 342h2v42h-2zM1225 346h2v10h-2zM1229 343h2v8h-2zM1241 397h2v6h-2zM1249 397h2v11h-2zM1265 418h2v6h-2zM1269 386h2v37h-2zM1273 356h2v31h-2zM1281 347h2v9h-2zM1289 340h2v6h-2zM1297 341h2v3h-2zM1301 323h2v20h-2zM1313 360h2v4h-2zM1337 404h2v12h-2zM1341 403h2v14h-2zM1357 448h2v15h-2zM1365 454h2v4h-2zM1373 482h2v3h-2zM1393 497h2v2h-2zM1401 491h2v25h-2zM1409 485h2v7h-2zM1421 502h2v5h-2zM1425 480h2v23h-2zM1429 477h2v15h-2zM1437 476h2v16h-2zM1449 502h2v1h-2zM1453 500h2v2h-2zM1457 482h2v19h-2zM1465 481h2v28h-2zM1469 453h2v26h-2zM1473 422h2v31h-2zM1489 439h2v11h-2zM1497 462h2v6h-2zM1501 457h2v10h-2zM1509 453h2v9h-2zM1517 488h2v4h-2zM1525 487h2v5h-2zM1529 487h2v1h-2zM1533 486h2v1h-2zM1537 476h2v44h-2zM1545 473h2v48h-2zM1549 469h2v13h-2zM1561 482h2v1h-2zM1573 492h2v1h-2zM1585 484h2v11h-2zM1589 481h2v4h-2zM1593 478h2v4h-2zM1597 472h2v7h-2zM1605 469h2v10h-2zM1609 469h2v11h-2zM1613 454h2v19h-2zM1621 460h2v4h-2zM1625 448h2v13h-2zM1629 443h2v18h-2zM1633 460h2v3h-2zM1637 456h2v7h-2zM1641 453h2v4h-2zM1649 450h2v7h-2zM1653 448h2v5h-2zM1657 437h2v10h-2zM1665 408h2v39h-2zM1681 490h2v3h-2zM1689 496h2v3h-2zM1701 511h2v2h-2zM1705 508h2v4h-2zM1717 494h2v13h-2zM1721 486h2v8h-2zM1729 470h2v23h-2zM1741 593h2v8h-2zM1745 580h2v21h-2zM1761 585h2v5h-2zM1769 581h2v7h-2zM1777 581h2v5h-2zM1789 594h2v1h-2zM1797 602h2v3h-2zM1801 598h2v8h-2zM1817 608h2v25h-2zM1825 601h2v9h-2zM1829 601h2v9h-2z"/>
<path fill="#fff" stroke="#0f0" d="M1113 267h2v7h-2zM1125 272h2v9h-2zM1129 282h2v14h-2zM1137 290h2v4h-2zM1145 288h2v9h-2zM1157 273h2v7h-2zM1205 339h2v89h-2zM1213 363h2v20h-2zM1221 342h2v14h-2zM1233 352h2v37h-2zM1237 389h2v14h-2zM1245 397h2v11h-2zM1253 397h2v1h-2zM1257 397h2v24h-2zM1261 418h2v5h-2zM1277 354h2v3h-2zM1285 344h2v3h-2zM1293 341h2v10h-2zM1305 323h2v13h-2zM1309 337h2v27h-2zM1317 360h2v4h-2zM1321 366h2v6h-2zM1325 372h2v6h-2zM1329 378h2v6h-2zM1333 384h2v21h-2zM1345 403h2v4h-2zM1349 408h2v18h-2zM1353 426h2v37h-2zM1361 447h2v9h-2zM1369 454h2v31h-2zM1377 482h2v8h-2zM1381 489h2v8h-2zM1385 497h2v1h-2zM1389 492h2v7h-2zM1397 496h2v20h-2zM1405 486h2v5h-2zM1413 487h2v7h-2zM1417 493h2v14h-2zM1433 477h2v15h-2zM1441 476h2v16h-2zM1445 491h2v12h-2zM1461 482h2v28h-2zM1477 423h2v13h-2zM1481 437h2v4h-2zM1485 438h2v12h-2zM1493 438h2v25h-2zM1505 456h2v5h-2zM1513 453h2v35h-2zM1521 489h2v3h-2zM1541 473h2v48h-2zM1553 469h2v13h-2zM1557 480h2v3h-2zM1565 480h2v3h-2zM1569 482h2v10h-2zM1577 491h2v2h-2zM1581 492h2v3h-2zM1601 472h2v8h-2zM1617 454h2v10h-2zM1645 453h2v4h-2zM1661 437h2v10h-2zM1669 408h2v6h-2zM1673 414h2v36h-2zM1677 452h2v41h-2zM1685 492h2v6h-2zM1693 497h2v12h-2zM1697 509h2v4h-2zM1709 507h2v1h-2zM1713 506h2v2h-2zM1725 483h2v3h-2zM1733 492h2v52h-2zM1737 544h2v48h-2zM1749 579h2v2h-2zM1753 579h2v14h-2zM1757 590h2v5h-2zM1765 586h2v3h-2zM1773 581h2v5h-2zM1781 580h2v2h-2zM1785 582h2v13h-2zM1793 593h2v13h-2zM1805 596h2v2h-2zM1809 598h2v11h-2zM1813 608h2v25h-2zM1821 607h2v2h-2z"/>
<path fill="none" stroke="#f00" d="M1110 292L1118 287 1130 281 1135 282 1143 285 1153 284 1167 279 1178 274 1185 267 1189 262 1209 262 1228 293 1237 320 1247 353 1257 383 1263 385 1267 388 1287 389 1299 378 1307 367 1322 353 1327 352 1333 355 1350 377 1362 400 1382 442 1390 460 1400 475 1407 483 1413 485 1422 493 1447 492 1457 492 1467 492 1477 480 1492 469 1505 461 1510 457 1523 457 1535 469 1543 478 1560 482 1580 487 1595 487 1600 482 1608 483 1622 477 1638 467 1657 457 1673 446 1688 455 1713 480 1735 505 1757 535 1773 562 1783 578 1793 588 1808 592 1820 598 1830 601"/>
</g>
<rect x="1109" y="161" width="732" height="496" fill="none" stroke="#fff"/>
<path stroke="#fff" d="M1841 197h4M1841 246h4M1841 295h4M1841 344h4M1841 393h4M1841 442h4M1841 491h4M1841 540h4M1841 589h4M1841 638h4M1110 657v4M1206 657v4M1302 657v4M1398 657v4M1494 657v4M1590 657v4M1686 657v4M1782 657v4"/>
</g>
<rect x="1110" y="163" width="274" height="20" fill="#000"/>
<rect x="1110" y="181" width="258" height="81" fill="#000"/>
<path d="M1113 174l4.500-5 4.500 5z" fill="#fff"/>
<g class="w">
<text x="1128.300" y="176" textLength="49" lengthAdjust="spacingAndGlyphs">GOLD,H1</text>
<text x="1186.700" y="176" textLength="45.300" lengthAdjust="spacingAndGlyphs">1255.29</text>
<text x="1236.700" y="176" textLength="45.300" lengthAdjust="spacingAndGlyphs">1255.72</text>
<text x="1286.500" y="176" textLength="45.500" lengthAdjust="spacingAndGlyphs">1254.68</text>
<text x="1336" y="176" textLength="45" lengthAdjust="spacingAndGlyphs">1255.31</text>
<text x="1848.300" y="202" textLength="45.300" lengthAdjust="spacingAndGlyphs">1287.25</text>
<text x="1848.300" y="251" textLength="45.300" lengthAdjust="spacingAndGlyphs">1283.40</text>
<text x="1848.300" y="300" textLength="45.300" lengthAdjust="spacingAndGlyphs">1279.50</text>
<text x="1848.300" y="349" textLength="45.300" lengthAdjust="spacingAndGlyphs">1275.60</text>
<text x="1848.300" y="398" textLength="45.300" lengthAdjust="spacingAndGlyphs">1271.75</text>
<text x="1848.300" y="447" textLength="45.300" lengthAdjust="spacingAndGlyphs">1267.85</text>
<text x="1848.300" y="496" textLength="45.300" lengthAdjust="spacingAndGlyphs">1264.00</text>
<text x="1848.300" y="545" textLength="45.300" lengthAdjust="spacingAndGlyphs">1260.10</text>
<text x="1848.300" y="594" textLength="45.300" lengthAdjust="spacingAndGlyphs">1256.25</text>
<text x="1848.300" y="643" textLength="45.300" lengthAdjust="spacingAndGlyphs">1252.35</text>
<text x="1109.300" y="673" textLength="68.400" lengthAdjust="spacingAndGlyphs">20 Apr 2017</text>
<text x="1205.700" y="673" textLength="72" lengthAdjust="spacingAndGlyphs">24 Apr 01:00</text>
<text x="1301.300" y="673" textLength="72.400" lengthAdjust="spacingAndGlyphs">25 Apr 02:00</text>
<text x="1397.300" y="673" textLength="72.400" lengthAdjust="spacingAndGlyphs">26 Apr 03:00</text>
<text x="1493.300" y="673" textLength="72.400" lengthAdjust="spacingAndGlyphs">27 Apr 04:00</text>
<text x="1589.700" y="673" textLength="72" lengthAdjust="spacingAndGlyphs">28 Apr 05:00</text>
<text x="1685.300" y="673" textLength="67" lengthAdjust="spacingAndGlyphs">1 May 06:00</text>
<text x="1781.700" y="673" textLength="66.600" lengthAdjust="spacingAndGlyphs">2 May 07:00</text>
</g>
<rect x="1843" y="594" width="56" height="14" fill="#fff"/>
<text x="1848.300" y="606" fill="#000" textLength="45.300" lengthAdjust="spacingAndGlyphs">1255.31</text>

<!-- one-click panel: daily -->
<rect x="297" y="184" width="60" height="27.500" fill="url(#bs)"/><rect x="297.500" y="184.500" width="59" height="27" fill="none" stroke="#0a0ab0"/>
<rect x="488" y="184" width="60" height="27.500" fill="url(#bs)"/><rect x="488.500" y="184.500" width="59" height="27" fill="none" stroke="#0a0ab0"/>
<rect x="297" y="211.500" width="125" height="48.500" fill="url(#bp)"/><rect x="424" y="211.500" width="124" height="48.500" fill="url(#bp)"/>
<path d="M301 211.500H353M492 211.500H544" stroke="#a8a8ff"/>
<rect x="359" y="184" width="127" height="25" fill="#fff"/>
<rect x="359" y="184" width="24.500" height="25" fill="#e6e6e6"/><rect x="462" y="184" width="24" height="25" fill="#e6e6e6"/>
<rect x="359.500" y="184.500" width="126" height="24" fill="none" stroke="#aaa"/>
<path d="M383.500 184v25M462.500 184v25" stroke="#aaa"/>
<path d="M367.700 195h7.600l-3.800 4.500zM470 198.500h7.400l-3.700-4.500z" fill="#111"/>
<text x="430" y="202" style="font-size:15px" fill="#111" textLength="25.700" lengthAdjust="spacingAndGlyphs">1.00</text>
<g class="w">
<text x="311.700" y="202.700" style="font-size:14px" fill="#fff" textLength="29.300" lengthAdjust="spacingAndGlyphs">SELL</text>
<text x="505" y="202.700" style="font-size:14px" fill="#fff" textLength="25.700" lengthAdjust="spacingAndGlyphs">BUY</text>
<text x="320" y="249.300" style="font-size:15px;font-weight:bold" textLength="34.300" lengthAdjust="spacingAndGlyphs">1255</text>
<text x="446.300" y="249.300" style="font-size:15px;font-weight:bold" textLength="34" lengthAdjust="spacingAndGlyphs">1255</text>
<text x="361" y="248.700" style="font-family:'Liberation Sans',sans-serif;font-size:37px" textLength="34" lengthAdjust="spacingAndGlyphs">31</text>
<text x="487.300" y="248.700" style="font-family:'Liberation Sans',sans-serif;font-size:37px" textLength="38" lengthAdjust="spacingAndGlyphs">76</text>
</g>

<!-- one-click panel: H1 -->
<rect x="1113" y="184" width="60" height="27.500" fill="url(#bs)"/><rect x="1113.500" y="184.500" width="59" height="27" fill="none" stroke="#0a0ab0"/>
<rect x="1304" y="184" width="60" height="27.500" fill="url(#bs)"/><rect x="1304.500" y="184.500" width="59" height="27" fill="none" stroke="#0a0ab0"/>
<rect x="1113" y="211.500" width="125" height="48.500" fill="url(#bp)"/><rect x="1240" y="211.500" width="124" height="48.500" fill="url(#bp)"/>
<path d="M1117 211.500H1169M1308 211.500H1360" stroke="#a8a8ff"/>
<rect x="1175" y="184" width="127" height="25" fill="#fff"/>
<rect x="1175" y="184" width="24.500" height="25" fill="#e6e6e6"/><rect x="1278" y="184" width="24" height="25" fill="#e6e6e6"/>
<rect x="1175.500" y="184.500" width="126" height="24" fill="none" stroke="#aaa"/>
<path d="M1199.500 184v25M1278.500 184v25" stroke="#aaa"/>
<path d="M1183.700 195h7.600l-3.800 4.500zM1286 198.500h7.400l-3.700-4.500z" fill="#111"/>
<text x="1246" y="202" style="font-size:15px" fill="#111" textLength="25.700" lengthAdjust="spacingAndGlyphs">1.00</text>
<g class="w">
<text x="1127.700" y="202.700" style="font-size:14px" textLength="29.300" lengthAdjust="spacingAndGlyphs">SELL</text>
<text x="1321" y="202.700" style="font-size:14px" textLength="25.700" lengthAdjust="spacingAndGlyphs">BUY</text>
<text x="1136" y="249.300" style="font-size:15px;font-weight:bold" textLength="34.300" lengthAdjust="spacingAndGlyphs">1255</text>
<text x="1262.300" y="249.300" style="font-size:15px;font-weight:bold" textLength="34" lengthAdjust="spacingAndGlyphs">1255</text>
<text x="1177" y="248.700" style="font-family:'Liberation Sans',sans-serif;font-size:37px" textLength="34" lengthAdjust="spacingAndGlyphs">31</text>
<text x="1303.300" y="248.700" style="font-family:'Liberation Sans',sans-serif;font-size:37px" textLength="38" lengthAdjust="spacingAndGlyphs">76</text>
</g>

<!-- bottom tabs -->
<rect x="280" y="691" width="1633" height="29" fill="#f0f0f0"/>
<rect x="278" y="691" width="1635" height="1" fill="#555"/>
<rect x="278" y="692" width="1635" height="1" fill="#fff"/>
<rect x="278" y="693" width="1635" height="1" fill="#111"/>
<text x="299" y="712" fill="#8a8a8a" textLength="76" lengthAdjust="spacingAndGlyphs">GOLD,Daily</text>
<path d="M389.500 694V716.500H476.500V694" fill="#fff" stroke="#111" stroke-width="1.300"/>
<text x="402" y="712" fill="#111" textLength="60" lengthAdjust="spacingAndGlyphs">GOLD,H1</text>
<path d="M1878 700l-5 5 5 5zM1897 700l5 5-5 5z" fill="#a8a8a8"/>
</svg>
</body></html>
